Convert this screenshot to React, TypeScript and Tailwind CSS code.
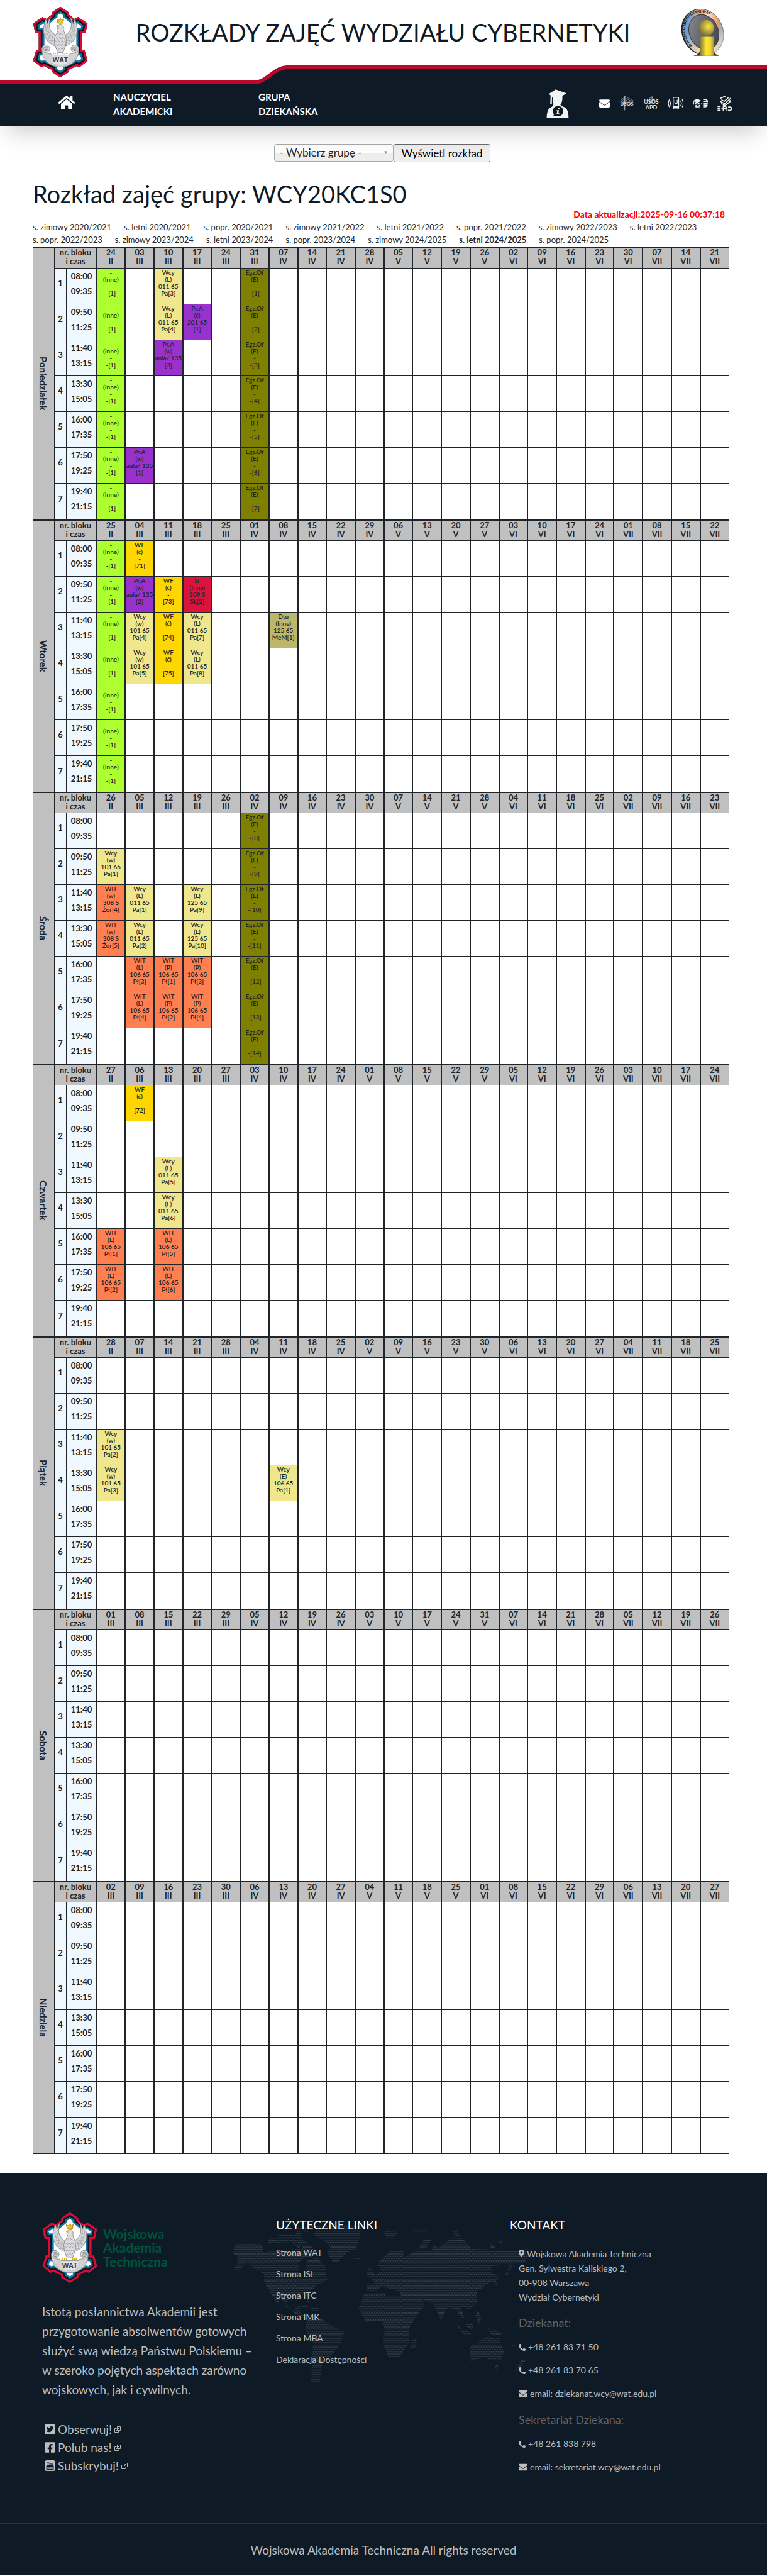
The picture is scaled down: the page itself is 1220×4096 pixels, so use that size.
import React from "react";
import {
  FaEnvelope,
  FaFacebookSquare,
  FaHome,
  FaMapMarkerAlt,
  FaPhoneAlt,
  FaTwitterSquare,
} from "react-icons/fa";

const SEMESTERS = [
  "s. zimowy 2020/2021",
  "s. letni 2020/2021",
  "s. popr. 2020/2021",
  "s. zimowy 2021/2022",
  "s. letni 2021/2022",
  "s. popr. 2021/2022",
  "s. zimowy 2022/2023",
  "s. letni 2022/2023",
  "s. popr. 2022/2023",
  "s. zimowy 2023/2024",
  "s. letni 2023/2024",
  "s. popr. 2023/2024",
  "s. zimowy 2024/2025",
  "s. letni 2024/2025",
  "s. popr. 2024/2025",
];
const CURRENT = "s. letni 2024/2025";

const BLOCKS = [
  ["08:00", "09:35"],
  ["09:50", "11:25"],
  ["11:40", "13:15"],
  ["13:30", "15:05"],
  ["16:00", "17:35"],
  ["17:50", "19:25"],
  ["19:40", "21:15"],
];

const ROMAN = ["I", "II", "III", "IV", "V", "VI", "VII", "VIII", "IX", "X", "XI", "XII"];
const WEEKS = Array.from({ length: 22 }, (_, i) => i);

const KIND = {
  inne: "bg-[#adff2f]",
  wcy: "bg-[#f0e68c]",
  pra: "bg-[#9932cc]",
  egz: "bg-[#808000]",
  wf: "bg-[#ffd700]",
  sr: "bg-[#dc143c]",
  dtu: "bg-[#bdb76b]",
  wit: "bg-[#ff7f50]",
};

type Entry = { kind: keyof typeof KIND; lines: string[] };

const inne: Entry = { kind: "inne", lines: ["-", "(Inne)", "-", "-[1]"] };
const egz = (n: number): Entry => ({ kind: "egz", lines: ["Egz.Of", "(E)", "-", `-[${n}]`] });
const wcy = (type: string, room: string, n: number): Entry => ({
  kind: "wcy",
  lines: ["Wcy", `(${type})`, `${room} 65`, `Pa[${n}]`],
});
const pra = (type: string, room: string, n: number): Entry => ({
  kind: "pra",
  lines: ["Pr.A", `(${type})`, room, `[${n}]`],
});
const wf = (n: number): Entry => ({ kind: "wf", lines: ["WF", "(ć)", "-", `[${n}]`] });
const wit = (type: string, n: number): Entry => ({
  kind: "wit",
  lines: ["WIT", `(${type})`, "106 65", `Pł[${n}]`],
});
const witLecture = (n: number): Entry => ({
  kind: "wit",
  lines: ["WIT", "(w)", "308 S", `Żor[${n}]`],
});

/* Entries are keyed by "block-week", both counted from zero. */
type Day = { name: string; entries: Record<string, Entry> };

const everyBlock = (week: number, make: (block: number) => Entry) =>
  Object.fromEntries(BLOCKS.map((_, b) => [`${b}-${week}`, make(b)]));

const DAYS: Day[] = [
  {
    name: "Poniedziałek",
    entries: {
      ...everyBlock(0, () => inne),
      ...everyBlock(5, (b) => egz(b + 1)),
      "0-2": wcy("L", "011", 3),
      "1-2": wcy("L", "011", 4),
      "1-3": pra("ć", "201 65", 1),
      "2-2": pra("w", "aula/ 135", 3),
      "5-1": pra("w", "aula/ 135", 1),
    },
  },
  {
    name: "Wtorek",
    entries: {
      ...everyBlock(0, () => inne),
      "0-1": wf(71),
      "1-1": pra("w", "aula/ 135", 2),
      "1-2": wf(73),
      "1-3": { kind: "sr", lines: ["Sr", "(Inne)", "309 S", "SŁ[2]"] },
      "2-1": wcy("w", "101", 4),
      "2-2": wf(74),
      "2-3": wcy("L", "011", 7),
      "2-6": { kind: "dtu", lines: ["Dtu", "(Inne)", "125 65", "MeM[1]"] },
      "3-1": wcy("w", "101", 5),
      "3-2": wf(75),
      "3-3": wcy("L", "011", 8),
    },
  },
  {
    name: "Środa",
    entries: {
      ...everyBlock(5, (b) => egz(b + 8)),
      "1-0": wcy("w", "101", 1),
      "2-0": witLecture(4),
      "2-1": wcy("L", "011", 1),
      "2-3": wcy("L", "125", 9),
      "3-0": witLecture(5),
      "3-1": wcy("L", "011", 2),
      "3-3": wcy("L", "125", 10),
      "4-1": wit("L", 3),
      "4-2": wit("P", 1),
      "4-3": wit("P", 3),
      "5-1": wit("L", 4),
      "5-2": wit("P", 2),
      "5-3": wit("P", 4),
    },
  },
  {
    name: "Czwartek",
    entries: {
      "0-1": wf(72),
      "2-2": wcy("L", "011", 5),
      "3-2": wcy("L", "011", 6),
      "4-0": wit("L", 1),
      "4-2": wit("L", 5),
      "5-0": wit("L", 2),
      "5-2": wit("L", 6),
    },
  },
  {
    name: "Piątek",
    entries: {
      "2-0": wcy("w", "101", 2),
      "3-0": wcy("w", "101", 3),
      "3-6": wcy("E", "106", 1),
    },
  },
  { name: "Sobota", entries: {} },
  { name: "Niedziela", entries: {} },
];

function Emblem({ className }: { className: string }) {
  const outline =
    "M155 30L197 58V70L224 92L243 83L290 115L279 165H262V250H275L290 305L249 338L236 331L198 350V361L155 389L112 361V350L74 331L61 338L20 305L35 250H48V165H31L20 115L67 83L86 92L113 70V58Z";
  const clip = React.useId();
  return (
    <svg viewBox="18 28 274 364" preserveAspectRatio="none" className={className} aria-hidden="true">
      <clipPath id={clip}>
        <path d={outline} />
      </clipPath>
      <g clipPath={`url(#${clip})`}>
        <path d={outline} fill="#fff" stroke="#0b76b0" strokeWidth="56" />
        <path d={outline} fill="none" stroke="#15161a" strokeWidth="37" />
        <path d={outline} fill="none" stroke="#dc0a36" strokeWidth="20" />
      </g>
      {[1, -1].map((side) => (
        <g key={side} transform={side === 1 ? undefined : "translate(310 0) scale(-1 1)"}>
          <path
            d="M108 84C98 104 96 130 108 152C118 168 130 174 142 176L138 232C112 226 88 206 80 184C68 160 70 122 84 94C88 106 90 112 92 118C94 104 100 90 108 84Z"
            fill="#d6d6d8"
            stroke="#8b8b8e"
            strokeWidth="3"
          />
          <path
            d="M84 112C78 140 86 168 104 188M92 120C90 146 98 168 118 186M101 112C98 138 106 160 130 178M78 150L100 162M80 170L108 176M88 190L120 190M98 204L130 200M108 216L136 212M80 130L98 142M104 170L96 196M118 178L110 210M130 184L124 222"
            fill="none"
            stroke="#9c9c9f"
            strokeWidth="2"
          />
        </g>
      ))}
      <path
        d="M155 118C168 118 174 130 170 144C172 160 186 178 184 200C184 222 176 244 168 262H142C134 244 126 222 126 200C124 178 142 164 144 148C138 142 138 122 155 118Z"
        fill="#dcdcde"
        stroke="#88888b"
        strokeWidth="3"
      />
      <path
        d="M134 186L142 194L150 186L158 194L166 186L176 194M130 202L138 210L146 202L155 210L164 202L172 210L180 202M132 220L141 228L150 220L158 228L167 220L176 228M138 238L147 246L155 238L163 246L172 238M146 164L152 172L160 164L168 172"
        fill="none"
        stroke="#8f8f92"
        strokeWidth="2.5"
      />
      <path d="M138 92L146 100L155 88L164 100L172 92L168 114H142Z" fill="#f3c519" stroke="#a87a0c" strokeWidth="3" />
      <path d="M134 124L150 122L146 132L150 138L140 134Z" fill="#e5b40f" />
      <path
        d="M64 244C62 300 104 336 155 336C206 336 248 300 246 244C240 262 222 270 204 268L198 276H112L106 268C88 270 70 262 64 244Z"
        fill="#d3d3d5"
        stroke="#8b8b8e"
        strokeWidth="3"
      />
      <path d="M78 282C96 314 126 326 155 326C184 326 214 314 232 282" fill="none" stroke="#a3a3a6" strokeWidth="3" strokeDasharray="4 9" />
      {[83, 227].map((x) => (
        <g key={x} stroke="#8b8b8e" fill="#dcdcdd" strokeWidth="3">
          <circle cx={x} cy="243" r="19" />
          <circle cx={x} cy="243" r="11" fill="#c9c9cb" />
          <circle cx={x} cy="243" r="4" />
        </g>
      ))}
      <path d="M118 268H144M166 268H192" stroke="#d9a90f" strokeWidth="7" strokeDasharray="6 3" />
      <path d="M112 278H198L190 318C168 326 142 326 120 318Z" fill="#e3e3e5" />
      <text x="155" y="313" textAnchor="middle" fontSize="34" fontWeight="700" fontFamily="Open Sans, sans-serif" fill="#3d3d40">
        WAT
      </text>
    </svg>
  );
}

function FacultyLogo({ className }: { className: string }) {
  return (
    <svg viewBox="736 12 230 244" className={className} aria-hidden="true">
      <defs>
        <linearGradient id="ring" x1="0" y1="0.2" x2="1" y2="0.8">
          <stop offset="0" stopColor="#4f86c9" />
          <stop offset="0.22" stopColor="#7fa5cf" />
          <stop offset="0.42" stopColor="#f2a55e" />
          <stop offset="0.6" stopColor="#f3e3d2" />
          <stop offset="0.78" stopColor="#e9a068" />
          <stop offset="1" stopColor="#3f8ae0" />
        </linearGradient>
        <linearGradient id="ringLow" x1="0" y1="0" x2="0" y2="1">
          <stop offset="0.45" stopColor="#e7f0dc" stopOpacity="0" />
          <stop offset="0.85" stopColor="#e7f0dc" />
        </linearGradient>
        <linearGradient id="disc" x1="0" y1="0" x2="1" y2="1">
          <stop offset="0" stopColor="#8a8d95" />
          <stop offset="1" stopColor="#3b3d46" />
        </linearGradient>
        <radialGradient id="ball" cx="0.65" cy="0.4" r="0.65">
          <stop offset="0" stopColor="#ffe93a" />
          <stop offset="0.5" stopColor="#b9a542" />
          <stop offset="1" stopColor="#6c6848" />
        </radialGradient>
        <linearGradient id="column" x1="0" x2="1">
          <stop offset="0" stopColor="#77713f" />
          <stop offset="0.45" stopColor="#ffe52e" />
          <stop offset="0.75" stopColor="#f3d92e" />
          <stop offset="1" stopColor="#a3923a" />
        </linearGradient>
        <path id="ringText" d="M797 200C750 160 748 88 784 54C824 18 884 26 920 72C950 114 958 160 936 208" />
      </defs>
      <ellipse cx="846" cy="131" rx="102" ry="121" transform="rotate(-24 846 131)" fill="#23262e" />
      <ellipse cx="852" cy="130" rx="102" ry="120" transform="rotate(-24 852 130)" fill="url(#ring)" stroke="#333" strokeWidth="2" />
      <ellipse cx="852" cy="130" rx="102" ry="120" transform="rotate(-24 852 130)" fill="url(#ringLow)" opacity="0.7" />
      <ellipse cx="856" cy="131" rx="74" ry="92" transform="rotate(-24 856 131)" fill="url(#disc)" stroke="#33353c" strokeWidth="3" />
      <path d="M802 252C826 246 832 238 835 228H907C912 240 918 246 934 252Z" fill="#3a3726" />
      <circle cx="867" cy="110" r="41" fill="url(#ball)" />
      <rect x="835" y="155" width="72" height="97" fill="url(#column)" />
      <text fontSize="19" fontWeight="700" fontFamily="Liberation Sans, sans-serif" fill="#16181d">
        <textPath href="#ringText">WYDZIAŁ CYBERNETYKI WAT</textPath>
      </text>
    </svg>
  );
}

function StudentIcon() {
  return (
    <svg viewBox="64 412 116 150" className="h-12 w-9" fill="#f4f4f4" aria-hidden="true">
      <path d="M112 414L168 434L146 446C148 470 142 484 136 492C140 500 152 502 160 506C174 514 178 540 178 560H66C66 534 72 512 86 506C94 502 100 498 101 488C96 480 96 470 98 462L93 450L92 488H84L86 444L77 436Z" />
      <circle cx="124" cy="525" r="27" fill="#0e1a26" />
      <path d="M104 540L98 552L116 548Z" fill="#0e1a26" />
      <circle cx="127" cy="511" r="5" />
      <path d="M117 520H129L125 536L131 535L129 541H116L120 524H116Z" />
    </svg>
  );
}

function UsosIcon() {
  return (
    <svg viewBox="0 0 72 72" className="h-6 w-6" fill="none" stroke="#b9bdc2" strokeWidth="2" aria-hidden="true">
      <path d="M2 28L28 4L70 26M6 32L28 12L66 30M10 36L28 20L62 34M14 40L28 28L58 38M18 46L28 36L54 44" />
      <path d="M26 0V70M31 2V56" strokeWidth="3" />
      <text x="36" y="48" textAnchor="middle" fontSize="24" fontFamily="Lato, sans-serif" fill="#d5d8db" stroke="none">
        USOS
      </text>
    </svg>
  );
}

function ApdIcon() {
  return (
    <svg viewBox="0 0 76 72" className="h-6 w-6" aria-hidden="true">
      <path d="M14 22L38 6L56 20M20 24L38 12L52 26M38 0V40M43 2V38M30 14V36" fill="none" stroke="#9ea3a9" strokeWidth="2.5" />
      <g fill="#e3e5e7" fontFamily="Lato, sans-serif" textAnchor="middle">
        <text x="38" y="40" fontSize="28">USOS</text>
        <text x="38" y="67" fontSize="28" fontWeight="700">APD</text>
      </g>
    </svg>
  );
}

function MobileIcon() {
  return (
    <svg viewBox="0 0 74 64" className="h-6 w-6" fill="none" stroke="#eceded" strokeWidth="4" aria-hidden="true">
      <rect x="24" y="4" width="27" height="56" rx="4" />
      <path d="M24 50H51" strokeWidth="10" />
      <path d="M32 16V28C32 38 44 38 44 28V16M15 20C10 28 10 38 15 46M6 14C-1 26 -1 40 6 52M60 20C65 28 65 38 60 46M68 14C75 26 75 40 68 52" />
    </svg>
  );
}

function CapIcon() {
  return (
    <svg viewBox="0 0 76 46" className="h-4 w-6" aria-hidden="true">
      <path d="M1 12L22 0L42 11L22 22ZM9 19L22 26L34 19V25L22 31L9 25ZM3 14H6V30H3Z" fill="#f4f4f4" />
      <path d="M16 32V42H34M30 34H37M42 26H48M52 5H64C74 8 76 14 74 18M52 14H74M52 24H75M52 33H74M52 42H64C70 40 73 38 74 34" fill="none" stroke="#f4f4f4" strokeWidth="5" />
    </svg>
  );
}

function EmdIcon() {
  return (
    <svg viewBox="0 0 74 74" className="h-6 w-6" fill="none" stroke="#f4f4f4" strokeWidth="5" aria-hidden="true">
      <path d="M14 14L40 2M20 20L34 28L56 8M14 28L36 40L66 12M22 34V40L38 48L62 30V22M30 44V50L40 55" />
      <path d="M1 54H16M1 63H14M1 72H16M20 63H26M29 74V56L38 66L47 56V74M53 56H62C74 58 74 70 62 72H52" />
    </svg>
  );
}

function YoutubeSquare() {
  return (
    <svg viewBox="0 0 34 34" className="h-[17px] w-[17px]" aria-hidden="true">
      <rect width="34" height="34" rx="7" fill="#bdbdbd" />
      <rect x="5" y="16" width="24" height="15" rx="3" fill="#0e1a26" />
      <g fontFamily="Liberation Sans, sans-serif" fontWeight="700" textAnchor="middle">
        <text x="17" y="13" fontSize="11" fill="#0e1a26">You</text>
        <text x="17" y="28" fontSize="10" fill="#bdbdbd">Tube</text>
      </g>
    </svg>
  );
}

function ExternalMark() {
  return (
    <svg viewBox="0 0 10 10" className="h-[10px] w-[10px]" fill="none" stroke="#b5b5b5" aria-hidden="true">
      <path d="M4.500 .5H9.500V6.500H4.500ZM3.500 3.500H.5V9.500H6.500V7.500M2.500 7.500L7.500 2.500M5.500 2.500H7.500V4.500" />
    </svg>
  );
}

function WorldMap() {
  return (
    <svg viewBox="0 0 1620 900" className="h-[286px] w-[515px] shrink-0" aria-hidden="true">
      <defs>
        <pattern id="dots" width="8.400" height="22.800" patternUnits="userSpaceOnUse">
          <circle cx="4.200" cy="5.700" r="3" fill="#3a4550" />
          <circle cx="0" cy="17.100" r="3" fill="#3a4550" />
          <circle cx="8.400" cy="17.100" r="3" fill="#3a4550" />
        </pattern>
      </defs>
      <g fill="url(#dots)">
        <path d="M75 190L190 188L205 215L205 238L270 230L390 220L420 200L460 215L470 250L400 272L380 290L390 345L410 368L425 345L420 300L430 275L480 265L520 310L520 350L532 372L470 405L445 430L440 460L432 488L418 450L380 446L330 470L325 500L350 530L390 500L392 540L420 560L480 555L540 600L612 635L590 700L550 750L500 800L490 885L445 885L452 780L455 700L420 620L425 570L380 555L320 510L300 470L270 450L292 492L275 495L212 385L210 345L150 310L130 285L90 320L58 330L80 285L75 255L50 240Z" />
        <path d="M400 502H430V510H400ZM445 515H482V530H445Z" />
        <path d="M230 190L350 185L380 215L430 190L400 170L390 130L430 140L440 110L380 115L370 150L340 145L280 150L275 170L240 160Z" />
        <path d="M400 105L640 100L700 115L680 190L670 220L620 240L580 288L555 285L525 240L545 215L520 185L460 150L480 120Z" />
        <path d="M655 260L705 258L695 276L655 276Z" />
        <path d="M735 312L752 315L765 350L780 345L795 320L778 295L800 270L850 225L905 228L910 262L985 225L1050 230L1060 200L1085 218L1110 190L1155 165L1210 170L1250 220L1400 225L1540 235L1520 285L1460 300L1430 350L1415 350L1440 300L1350 305L1350 345L1385 350L1375 395L1340 385L1275 435L1275 490L1240 520L1190 510L1215 560L1200 570L1170 520L1130 515L1095 575L1060 500L1000 470L1015 500L970 560L935 620L935 690L890 760L835 765L805 690L815 620L800 580L720 585L685 520L710 445L820 440L820 455L890 455L890 435L800 405L770 430L725 430L727 402L765 400L740 360L720 345Z" />
        <path d="M815 130L880 135L860 165H820ZM950 122H1028V133H950ZM1150 125L1175 128L1210 185L1185 180ZM980 220L1010 175L1050 170L1020 220ZM1340 180L1370 218L1345 218ZM1385 178H1402V190H1385ZM1515 213H1535V222H1515Z" />
        <path d="M950 675L975 665L968 715L942 715ZM1275 520L1298 560L1290 600L1270 560ZM1168 590L1200 620L1245 640V652L1205 645ZM1215 600L1260 590L1255 630ZM1320 610L1400 640L1395 652L1345 645Z" />
        <path d="M1240 710L1290 680L1330 655L1365 670L1385 665L1412 735L1395 775L1350 775L1310 765L1245 780ZM1365 795L1382 800L1378 835H1365ZM1450 700H1470V708H1450ZM1500 775L1520 780L1480 830H1465Z" />
      </g>
    </svg>
  );
}

function SiteHeader() {
  return (
    <header className="relative z-10 shadow-[0_20px_36px_-12px_rgba(0,0,0,0.22)]">
      <div className="relative flex h-[133px] items-start bg-white pr-[66px] pl-[52px]">
        <Emblem className="mt-[10px] h-[114px] w-[88px] shrink-0" />
        <div className="flex-1 pt-7 pr-1 text-center text-[38px] leading-[46px]">ROZKŁADY ZAJĘĆ WYDZIAŁU CYBERNETYKI</div>
        <FacultyLogo className="mt-[14px] h-[76px] w-[72px] shrink-0" />
        <svg
          viewBox="0 0 1220 31"
          preserveAspectRatio="xMinYMax slice"
          className="absolute inset-x-0 bottom-0 h-[31px] w-full"
          aria-hidden="true"
        >
          <path d="M0 29H404C426 29 434 5 458 5H1220V31H0Z" fill="#0e1a26" />
          <path d="M0 29H404C426 29 434 5 458 5H1220" fill="none" stroke="#b9082c" strokeWidth="6" />
        </svg>
      </div>
      <nav className="flex h-[67px] bg-[#0e1a26] pr-[55px] text-[15px] leading-[23px] font-bold text-white">
        <a href="#home" aria-label="Strona główna" className="mt-[18px] ml-[92px] w-[88px]">
          <FaHome className="h-6 w-7" />
        </a>
        <a href="#teacher" className="mt-[10px] w-[231px]">
          NAUCZYCIEL
          <br />
          AKADEMICKI
        </a>
        <a href="#group" className="mt-[10px]">
          GRUPA
          <br />
          DZIEKAŃSKA
        </a>
        <div className="ml-auto flex items-start">
          <a href="#student" aria-label="Informator" className="mt-2 mr-12">
            <StudentIcon />
          </a>
          <div className="mt-[19px] flex h-6 items-center gap-[15px]">
            <a href="#mail" aria-label="Poczta">
              <FaEnvelope className="h-[17px] w-[17px]" />
            </a>
            <a href="#usos" aria-label="USOS">
              <UsosIcon />
            </a>
            <a href="#apd" aria-label="USOS APD">
              <ApdIcon />
            </a>
            <a href="#mobile" aria-label="Mobilny USOS">
              <MobileIcon />
            </a>
            <a href="#ed" aria-label="E-dydaktyka">
              <CapIcon />
            </a>
            <a href="#emd" aria-label="E-MD">
              <EmdIcon />
            </a>
          </div>
        </div>
      </nav>
    </header>
  );
}

function DayRows({ day, index }: { day: Day; index: number }) {
  const top = index === 0 ? "border-t" : "border-t-2";
  return (
    <tbody className="text-center font-bold">
      <tr className={`h-[33px] bg-[#c0c0c0] text-[13px] leading-[14px] ${top}`}>
        <th rowSpan={8} scope="rowgroup" className="border-x-2 p-0 first:border-l">
          <span className="inline-block align-middle text-[15px] leading-5 [writing-mode:vertical-rl]">{day.name}</span>
        </th>
        <th colSpan={2} scope="col" className="p-0 align-top">
          nr. bloku
          <br />i czas
        </th>
        {WEEKS.map((week) => {
          const date = new Date(2025, 1, 24 + index + week * 7);
          return (
            <th key={week} scope="col" className="border-x-2 p-0 align-top last:border-r">
              {String(date.getDate()).padStart(2, "0")}
              <br />
              {ROMAN[date.getMonth()]}
            </th>
          );
        })}
      </tr>
      {BLOCKS.map(([from, to], block) => (
        <tr key={from} className="h-[57px] border-y last:h-[58px]">
          <th scope="row" className="border-x-2 bg-[#f0f8ff] p-0 pb-2 text-[13px]">
            {block + 1}
          </th>
          <td className="border-x-2 bg-[#f0f8ff] p-0 pb-2 text-[13px] leading-6">
            {from}
            <br />
            {to}
          </td>
          {WEEKS.map((week) => {
            const entry = day.entries[`${block}-${week}`];
            return (
              <td
                key={week}
                className={`border-x-2 p-0 pt-px align-top text-[10px] leading-[11px] font-semibold whitespace-nowrap last:border-r ${entry ? KIND[entry.kind] : ""}`}
              >
                {entry?.lines.map((line, i) => (
                  <div key={i}>{line}</div>
                ))}
              </td>
            );
          })}
        </tr>
      ))}
    </tbody>
  );
}

function Schedule() {
  return (
    <table className="w-full table-fixed border-collapse border border-[#212529] text-[#212529] [&_*]:border-[#212529]">
      <colgroup>
        <col className="w-[34px]" />
        <col className="w-[19px]" />
        <col className="w-[48px]" />
        {WEEKS.map((week) => (
          <col key={week} />
        ))}
      </colgroup>
      {DAYS.map((day, index) => (
        <DayRows key={day.name} day={day} index={index} />
      ))}
    </table>
  );
}

function SiteFooter() {
  return (
    <footer className="relative bg-[#0e1a26] text-[#bdbdbd]">
      <div className="absolute inset-x-0 top-[51px] flex justify-center overflow-hidden">
        <WorldMap />
      </div>
      <div className="relative grid grid-cols-3 px-[52px] pt-[62px] pb-[77px]">
        <section className="px-[15px]">
          <div className="flex items-center gap-[9px]">
            <Emblem className="h-[114px] w-[88px]" />
            <div className="text-[21px] leading-[22px] font-bold text-[#00523b]">
              Wojskowa
              <br />
              Akademia
              <br />
              Techniczna
            </div>
          </div>
          <p className="mt-[29px] text-[19px] leading-[31px]">
            Istotą posłannictwa Akademii jest przygotowanie absolwentów gotowych służyć swą wiedzą Państwu Polskiemu – w
            szeroko pojętych aspektach zarówno wojskowych, jak i cywilnych.
          </p>
          <ul className="mt-[33px] ml-1 text-[19px] leading-[29px]">
            <li>
              <a href="#twitter" className="flex items-center gap-1">
                <FaTwitterSquare className="h-[19px] w-[17px]" />
                <span>Obserwuj!</span>
                <ExternalMark />
              </a>
            </li>
            <li>
              <a href="#facebook" className="flex items-center gap-1">
                <FaFacebookSquare className="h-[19px] w-[17px]" />
                <span>Polub nas!</span>
                <ExternalMark />
              </a>
            </li>
            <li>
              <a href="#youtube" className="flex items-center gap-1">
                <YoutubeSquare />
                <span>Subskrybuj!</span>
                <ExternalMark />
              </a>
            </li>
          </ul>
        </section>
        <section className="px-[15px] pt-[10px]">
          <h2 className="text-[19px] leading-[22px] text-white">UŻYTECZNE LINKI</h2>
          <ul className="mt-4 text-[14px] leading-[34px]">
            {["Strona WAT", "Strona ISI", "Strona ITC", "Strona IMK", "Strona MBA", "Deklaracja Dostępności"].map((label) => (
              <li key={label}>
                <a href="#link">{label}</a>
              </li>
            ))}
          </ul>
        </section>
        <section className="px-[15px] pt-[10px]">
          <h2 className="text-[19px] leading-[22px] text-white">KONTAKT</h2>
          <div className="pl-[14px] text-[14px] leading-5">
            <address className="mt-[23px] leading-[23px] not-italic">
              <FaMapMarkerAlt className="mr-1 mb-1 inline h-3 w-[9px]" />
              Wojskowa Akademia Techniczna
              <br />
              Gen. Sylwestra Kaliskiego 2,
              <br />
              00-908 Warszawa
              <br />
              Wydział Cybernetyki
            </address>
            <h3 className="mt-[18px] text-[18px] leading-[22px] text-[#636363]">Dziekanat:</h3>
            <div className="mt-[18px] flex flex-col gap-[17px]">
              <Phone number="+48 261 83 71 50" />
              <Phone number="+48 261 83 70 65" />
              <Mail address="dziekanat.wcy@wat.edu.pl" />
            </div>
            <h3 className="mt-5 text-[18px] leading-[22px] text-[#636363]">Sekretariat Dziekana:</h3>
            <div className="mt-[18px] flex flex-col gap-[17px]">
              <Phone number="+48 261 838 798" />
              <Mail address="sekretariat.wcy@wat.edu.pl" />
            </div>
          </div>
        </section>
      </div>
      <div className="relative border-t border-[#2b3040] pt-[32px] pb-[30px] text-center text-[19px] leading-5">
        Wojskowa Akademia Techniczna All rights reserved
      </div>
    </footer>
  );
}

function Phone({ number }: { number: string }) {
  return (
    <a href={`tel:${number.replace(/ /g, "")}`} className="flex items-center gap-1">
      <FaPhoneAlt className="h-[11px] w-[11px]" />
      {number}
    </a>
  );
}

function Mail({ address }: { address: string }) {
  return (
    <a href={`mailto:${address}`} className="flex items-center gap-1">
      <FaEnvelope className="h-[14px] w-[14px]" />
      email: {address}
    </a>
  );
}

export default function App() {
  return (
    <div className="bg-white font-[Lato,sans-serif] text-[#0e1a26]">
      <SiteHeader />
      <main className="pt-[29px] pr-[60px] pb-[30px] pl-[52px]">
        <form className="ml-1 flex h-[29px] justify-center text-[17px]">
          <div className="relative h-7 w-[190px]">
            <select
              aria-label="Grupa"
              className="h-full w-full appearance-none rounded border border-[#aaaaaa] bg-linear-to-b from-white from-50% to-[#eeeeee] to-55% pr-5 pl-2 text-[#212529]"
            >
              <option>- Wybierz grupę -</option>
            </select>
            <span className="pointer-events-none absolute top-[7px] right-2 text-[8px] leading-3 text-[#888888]">▼</span>
          </div>
          <button type="button" className="rounded-[3px] border border-[#6b6b6b] bg-[#efefef] px-3 text-black">
            Wyświetl rozkład
          </button>
        </form>
        <h1 className="mt-[27px] text-[38px] leading-[46px]">Rozkład zajęć grupy: WCY20KC1S0</h1>
        <p className="pr-[7px] text-right text-[14px] leading-5 font-bold text-[#ff0000]">
          Data aktualizacji:2025-09-16 00:37:18
        </p>
        <ul className="mb-0.5 flex flex-wrap gap-x-5 text-[13px] leading-5 text-[#212529]">
          {SEMESTERS.map((name) => (
            <li key={name} className={name === CURRENT ? "font-bold" : ""}>
              <a href="#semester">{name}</a>
            </li>
          ))}
        </ul>
        <Schedule />
      </main>
      <SiteFooter />
    </div>
  );
}
